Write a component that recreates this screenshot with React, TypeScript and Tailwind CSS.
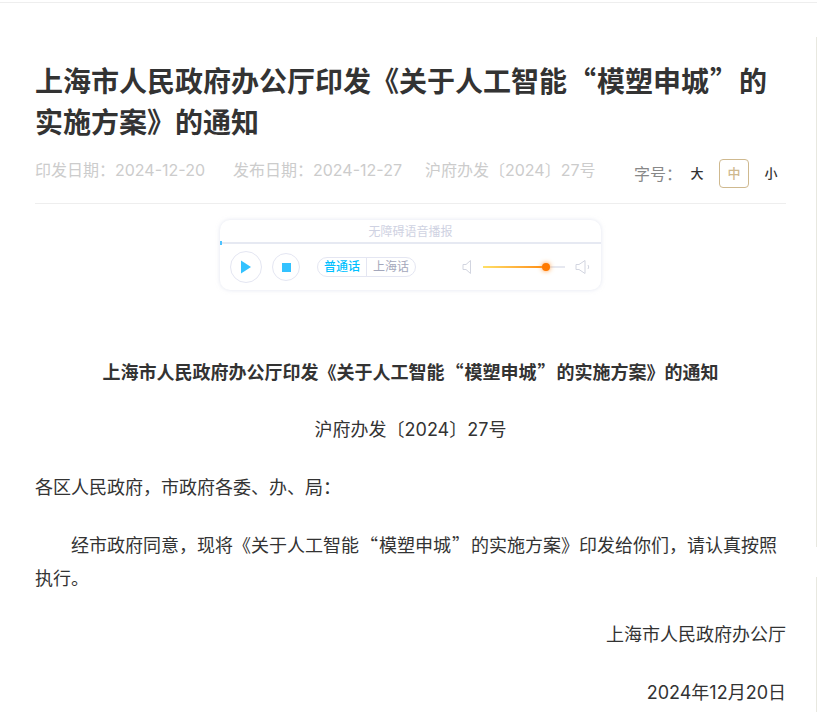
import React from "react";

const Q = ({ c }: { c: string }) => <span className="mx-[1px] font-['Noto_Sans_CJK_SC',sans-serif]">{c}</span>;

export default function App() {
  return (
    <div className="relative h-[712px] w-[817px] overflow-hidden bg-white font-['Inter','Noto_Sans_CJK_SC',sans-serif] text-[#333]">
      <div className="mt-[2px] h-[1px] bg-[#eeeeee]" />
      <div className="absolute right-0 top-[37px] h-[510px] w-[1px] bg-[#e8e8e0]" />
      <div className="absolute right-0 top-[577px] h-[135px] w-[1px] bg-[#e8e8e0]" />
      <main className="ml-[35px] w-[751px] pt-[57px]">
        <h1 className="text-[28px] font-bold leading-[41px] text-[#333]">
          上海市人民政府办公厅印发《关于人工智能<Q c="“" />模塑申城<Q c="”" />的<br />实施方案》的通知
        </h1>
        <div className="mt-[5px] flex h-[55px] items-start justify-between border-b border-[#eeeeee]">
          <div className="flex gap-[28px] pt-[9px] text-[16px] leading-[24px] text-[#cccccc]">
            <span>印发日期&#xFF1A;2024-12-20</span>
            <span>发布日期&#xFF1A;2024-12-27</span>
            <span className="ml-[-5px]">沪府办发〔2024〕27号</span>
          </div>
          <div className="flex items-center pt-[10px]">
            <span className="text-[16px] leading-[24px] text-[#888888]">字号&#xFF1A;</span>
            <span className="flex h-[29px] w-[30px] items-center justify-center text-[13px] font-medium text-[#333]">大</span>
            <span className="ml-[7px] flex h-[29px] w-[30px] items-center justify-center rounded-[4px] border border-[#cfb98f] text-[13px] font-medium text-[#cfb98f]">中</span>
            <span className="ml-[7px] flex h-[29px] w-[30px] items-center justify-center text-[13px] font-medium text-[#333]">小</span>
          </div>
        </div>
        <div className="ml-[185px] mt-[16px] h-[70px] w-[381px] rounded-[10px] shadow-[0_0_4px_rgba(200,205,225,0.55)]">
          <div className="relative flex h-[24px] items-center justify-center border-b-2 border-[#e6e9f2] pt-[1px] text-[12px] text-[#cfd2e2]">
            无障碍语音播报
            <span className="absolute bottom-[-3px] left-0 h-[4px] w-[2px] bg-[#4fc3ff]" />
          </div>
          <div className="flex h-[46px] items-center">
            <div className="ml-[10px] flex h-[32px] w-[32px] items-center justify-center rounded-full border border-[#e4e6f2]">
              <svg width="12" height="14" viewBox="0 0 12 14"><path d="M1 0.5 L11 7 L1 13.5 Z" fill="#33c2ff" /></svg>
            </div>
            <div className="ml-[10px] flex h-[28px] w-[28px] items-center justify-center rounded-full border border-[#e4e6f2]">
              <div className="h-[9px] w-[9px] bg-[#33c2ff]" />
            </div>
            <div className="ml-[17px] flex h-[20px] w-[99px] items-center rounded-full border border-[#e4e6f2] text-[12px]">
              <span className="flex h-full w-[49px] items-center justify-center border-r border-[#e4e6f2] font-medium text-[#00bfff]">普通话</span>
              <span className="flex h-full flex-1 items-center justify-center text-[#a4a7bb]">上海话</span>
            </div>
            <svg className="ml-[46px]" width="10" height="16" viewBox="0 0 10 16" fill="none" stroke="#d2d5e0" strokeWidth="1">
              <path d="M1 5.5 H4 L8.5 1.5 V14.5 L4 10.5 H1 Z" />
            </svg>
            <div className="relative ml-[11px] h-[2px] w-[82px] bg-[#e6e8f0]">
              <div className="h-full w-[63px] bg-gradient-to-r from-[#ffe066] to-[#ff8a00]" />
              <div className="absolute left-[59px] top-[-3px] h-[8px] w-[8px] rounded-full bg-[#ff7a00] shadow-[0_0_5px_#ff9a3c]" />
            </div>
            <svg className="ml-[10px]" width="16" height="16" viewBox="0 0 16 16" fill="none" stroke="#d2d5e0" strokeWidth="1">
              <path d="M1 5.5 H4 L10 1.5 V14.5 L4 10.5 H1 Z" />
              <path d="M13 6 Q14.5 8 13 10" />
            </svg>
          </div>
        </div>
        <article className="text-[18px] leading-[33px] text-[#333]">
          <p className="mt-[65px] text-center font-bold">上海市人民政府办公厅印发《关于人工智能<Q c="“" />模塑申城<Q c="”" />的实施方案》的通知</p>
          <p className="mt-[24px] text-center">沪府办发〔2024〕27号</p>
          <p className="mt-[25px]">各区人民政府&#xFF0C;市政府各委、办、局&#xFF1A;</p>
          <p className="mt-[24px] indent-[36px]">经市政府同意&#xFF0C;现将《关于人工智能<Q c="“" />模塑申城<Q c="”" />的实施方案》印发给你们&#xFF0C;请认真按照<br />执行。</p>
          <p className="mt-[23px] text-right">上海市人民政府办公厅</p>
          <p className="mt-[25px] text-right">2024年12月20日</p>
        </article>
      </main>
    </div>
  );
}
